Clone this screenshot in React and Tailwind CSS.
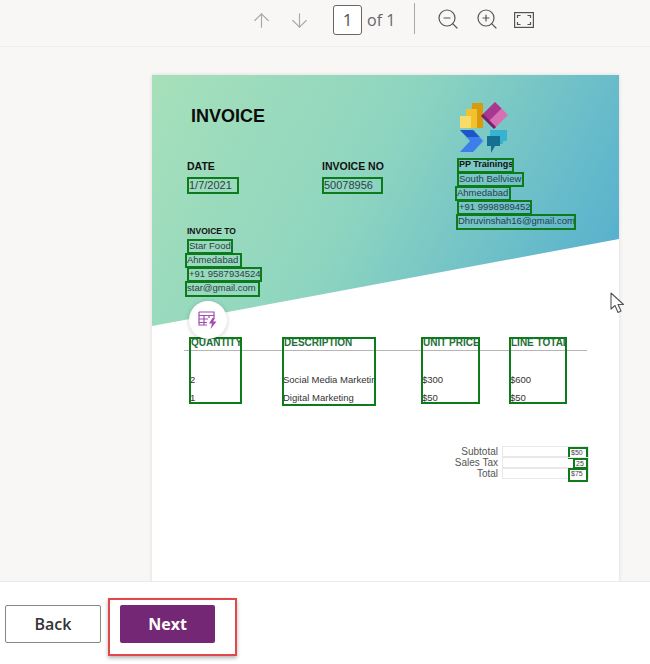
import React from "react";
import { ArrowUp, ArrowDown, ZoomIn, ZoomOut } from "lucide-react";

function Box({ className = "", children }) {
  return (
    <div className={`border-2 border-[#0d7a1c] leading-none whitespace-nowrap overflow-hidden ${className}`}>
      {children}
    </div>
  );
}

function FitIcon() {
  return (
    <svg width="20" height="16" viewBox="0 0 20 16" fill="none" stroke="#555" strokeWidth="1.2">
      <rect x="0.6" y="0.6" width="18.8" height="14.8" />
      <path d="M3.5 6V3.5H6.5M13.5 3.5H16.5V6M16.5 10V12.5H13.5M6.5 12.5H3.5V10" />
    </svg>
  );
}

function Logo() {
  return (
    <svg width="50" height="52" viewBox="0 0 50 52">
      <rect x="13" y="1" width="11" height="25" fill="#d99a0c" />
      <rect x="7" y="7" width="11" height="19" fill="#f2c12e" />
      <rect x="1" y="14" width="11" height="12" fill="#f8dc6a" />
      <path d="M36 0L49 13L36 26L23 13Z" fill="#d76fb5" />
      <path d="M36 0L23 13L29.5 19.500L42.500 6.500Z" fill="#a8378f" />
      <path d="M23 13L36 26L29.500 19.500Z" fill="#7a1f6c" stroke="#7a1f6c" strokeWidth="3" />
      <path d="M1 28H14L25 39L14 50H1L11 39Z" fill="#3d7fe8" />
      <path d="M1 28H14L21 35H8Z" fill="#1f54c4" />
      <path d="M14 50L25 39L15 29L24 39Z" fill="#8cc0f5" />
      <path d="M31 28H48V39H44V42H31Z" fill="#37b3cf" />
      <path d="M28 34H41V44H36L32 51V44H28Z" fill="#146f93" />
    </svg>
  );
}

function PowerIcon() {
  return (
    <svg width="20" height="20" viewBox="0 0 20 20" fill="none" stroke="#a24bb0" strokeWidth="1.2">
      <path d="M1 2H16V8M1 5.500H16M1 2V15H9M1 9H10M1 12.500H9M6 5.500V15M11 5.500V8" />
      <path d="M14.500 8L11 13.500H14L12.500 19L18.500 11.500H15.200L17 8Z" fill="#a24bb0" stroke="none" />
    </svg>
  );
}

function Cursor() {
  return (
    <svg width="16" height="23" viewBox="0 0 16 23">
      <path d="M1 1V17L5 13.500L8 20.500L11 19L8 12.500H13.500Z" fill="#fff" stroke="#555" strokeWidth="1.1" strokeLinejoin="round" />
    </svg>
  );
}

function TableColumn({ title, rows, className }) {
  return (
    <Box className={`text-[9.5px] ${className}`}>
      <div className="font-bold text-[#1f6f3a] text-[10px] leading-none -mt-[1px] h-[33px] pl-0">{title}</div>
      {rows.map((r) => (
        <div key={r} className="h-[18px] text-[#333] text-[9.5px] leading-[18px] -ml-[1px]">{r}</div>
      ))}
    </Box>
  );
}

function TotalRow({ label, value, boxClass }) {
  return (
    <div className="flex justify-end items-center h-[11px]">
      <span className="text-[10px] leading-none text-[#555] mr-[4px]">{label}</span>
      <div className="relative w-[87px] h-[11px] border border-[#e8e8e8]">
        <Box className={`absolute right-0 text-[7px] text-[#444] pl-[1px] bg-white ${boxClass}`}>{value}</Box>
      </div>
    </div>
  );
}

export default function App() {
  return (
    <div className="relative w-[650px] h-[664px] overflow-hidden flex flex-col bg-[#f8f7f6] font-['Liberation_Sans',sans-serif]">
      <header className="h-[47px] shrink-0 border-b border-[#efeeec] flex items-start pl-[250px] pt-[5px]">
        <ArrowUp size={23} strokeWidth={1.2} color="#a8a8a8" className="mt-[4px]" />
        <ArrowDown size={23} strokeWidth={1.2} color="#a8a8a8" className="mt-[4px] ml-[15px]" />
        <div className="ml-[22px] w-[29px] h-[30px] border border-[#666] rounded-[3px] bg-white flex items-center justify-center text-[17px] text-[#555] font-['Open_Sans',sans-serif]">1</div>
        <span className="ml-[5px] text-[16px] leading-[30px] text-[#666] font-['Open_Sans',sans-serif]">of 1</span>
        <div className="ml-[19px] -mt-[2px] w-px h-[31px] bg-[#a8a8a8]" />
        <ZoomOut size={24} strokeWidth={1.2} color="#555" className="ml-[21px] mt-[2px]" />
        <ZoomIn size={24} strokeWidth={1.2} color="#555" className="ml-[15px] mt-[2px]" />
        <div className="ml-[15px] mt-[7px]"><FitIcon /></div>
      </header>

      <main className="flex-1 overflow-hidden pl-[152px] pt-[28px]">
        <div className="relative w-[467px] h-[560px] bg-white shadow-[0_0_4px_rgba(0,0,0,0.12)] text-[#2f3f45]">
          <div className="absolute inset-x-0 top-0 h-[251px] bg-[linear-gradient(118deg,#a6e0ba_0%,#8ed5c0_45%,#4fabd0_100%)] [clip-path:polygon(0_0,100%_0,100%_164px,0_100%)]" />

          <div className="relative h-[262px] flex pl-[35px]">
            <div className="w-[269px]">
              <h1 className="ml-[4px] mt-[30px] text-[18px] leading-[22px] font-bold text-[#0c0c0c]">INVOICE</h1>
              <div className="flex mt-[32px]">
                <div className="w-[135px]">
                  <div className="text-[10.5px] leading-[14px] font-bold text-[#111]">DATE</div>
                  <Box className="mt-[4px] w-[52px] h-[17px] text-[11px] pt-[1px]">1/7/2021</Box>
                </div>
                <div>
                  <div className="text-[10.5px] leading-[14px] font-bold text-[#111]">INVOICE NO</div>
                  <Box className="mt-[4px] w-[61px] h-[17px] text-[11px] pt-[1px]">50078956</Box>
                </div>
              </div>
              <div className="mt-[31px] text-[8.500px] leading-[12px] font-bold text-[#111]">INVOICE TO</div>
              <div className="mt-[2px] flex flex-col items-start text-[9.500px]">
                <Box className="w-[46px] h-[15px]">Star Food</Box>
                <Box className="-ml-[2px] -mt-[1px] w-[57px] h-[15px]">Ahmedabad</Box>
                <Box className="-mt-[1px] w-[75px] h-[15px]">+91 9587934524</Box>
                <Box className="-ml-[2px] -mt-[1px] w-[75px] h-[16px]">star@gmail.com</Box>
              </div>
            </div>
            <div className="pt-[27px]">
              <div className="ml-[3px] h-[52px]"><Logo /></div>
              <div className="mt-[4px] flex flex-col items-start text-[9.500px] text-[#26404a]">
                <Box className="ml-[1px] w-[57px] h-[15px] font-bold text-[#111] text-[9px]">PP Trainings</Box>
                <Box className="ml-[1px] -mt-[1px] w-[67px] h-[15px]">South Bellview</Box>
                <Box className="-ml-[1px] -mt-[1px] w-[56px] h-[15px]">Ahmedabad</Box>
                <Box className="ml-[1px] -mt-[1px] w-[75px] h-[15px]">+91 9998989452</Box>
                <Box className="-mt-[1px] w-[120px] h-[16px]">Dhruvinshah16@gmail.com</Box>
              </div>
            </div>
          </div>

          <div className="relative flex pl-[37px]">
            <div className="absolute left-[32px] top-[13px] w-[403px] h-px bg-[#b5b5b5]" />
            <TableColumn title="QUANTITY" rows={["2", "1"]} className="relative w-[53px] h-[67px] pl-0" />
            <TableColumn title="DESCRIPTION" rows={["Social Media Marketing", "Digital Marketing"]} className="relative ml-[40px] w-[94px] h-[69px]" />
            <TableColumn title="UNIT PRICE" rows={["$300", "$50"]} className="relative ml-[45px] w-[59px] h-[67px]" />
            <TableColumn title="LINE TOTAL" rows={["$600", "$50"]} className="relative ml-[29px] w-[58px] h-[67px]" />
          </div>

          <div className="mt-[40px] w-[437px]">
            <TotalRow label="Subtotal" value="$50" boxClass="top-0 w-[20px] h-[12px]" />
            <TotalRow label="Sales Tax" value="25" boxClass="top-0 w-[15px] h-[11px]" />
            <TotalRow label="Total" value="$75" boxClass="-top-[1px] w-[20px] h-[14px]" />
          </div>

          <div className="absolute left-[37px] top-[226px] w-[38px] h-[38px] rounded-full bg-white shadow-[0_1px_5px_rgba(0,0,0,0.2)] flex items-center justify-center">
            <PowerIcon />
          </div>
        </div>
      </main>

      <footer className="h-[83px] shrink-0 border-t border-[#eceae8] bg-white flex items-start pt-[23px] pl-[5px]">
        <button className="w-[96px] h-[38px] border border-[#8a8886] rounded-[2px] bg-white text-[16px] font-semibold text-[#333] font-['Open_Sans',sans-serif]">Back</button>
        <div className="relative ml-[19px]">
          <button className="w-[95px] h-[38px] rounded-[2px] bg-[#742774] text-[16px] font-bold text-white font-['Open_Sans',sans-serif]">Next</button>
          <div className="absolute -left-[12px] -top-[7px] w-[129px] h-[58px] border-[2px] border-[#e2474b] shadow-[0_2px_4px_rgba(0,0,0,0.3)]" />
        </div>
      </footer>

      <div className="absolute left-[610px] top-[292px]"><Cursor /></div>
    </div>
  );
}
